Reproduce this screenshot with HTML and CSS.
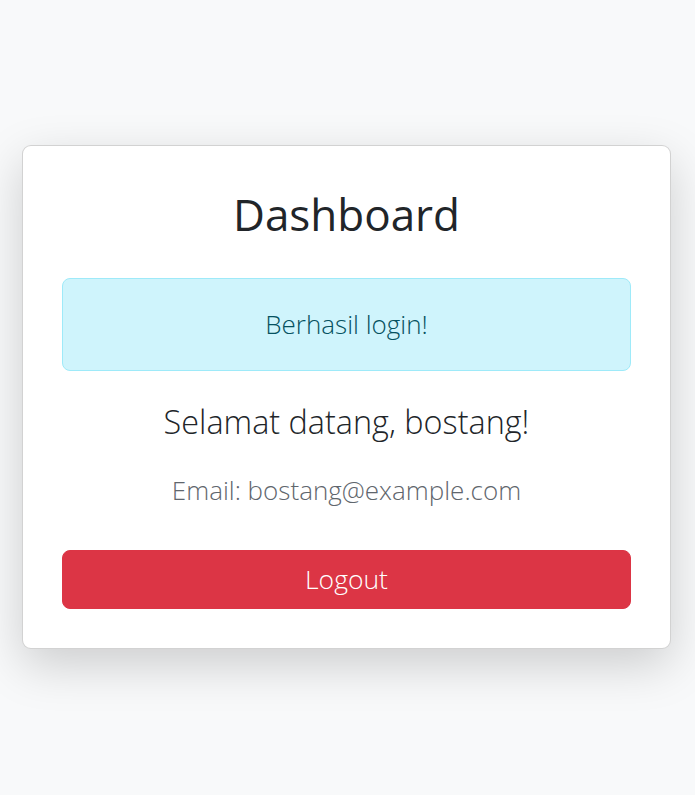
FILE: index.html
```html
<!DOCTYPE html>
<html lang="id">
<head>
<meta charset="utf-8">
<title>Dashboard</title>
<link rel="stylesheet" href="styles.css">
</head>
<body>
<main class="page">
  <section class="card">
    <h1 class="title">Dashboard</h1>
    <div class="alert">Berhasil login!</div>
    <p class="welcome">Selamat datang, bostang!</p>
    <p class="email">Email: bostang@example.com</p>
    <button class="logout" type="button">Logout</button>
  </section>
</main>
</body>
</html>
```
FILE: styles.css
```css
* { box-sizing: border-box; }
html, body { margin: 0; padding: 0; }
body {
  background: #f8f9fa;
  font-family: "Open Sans", "Noto Sans", sans-serif;
  font-weight: 300;
  color: #212529;
}
.page {
  min-height: 795px;
  display: flex;
  align-items: flex-start;
  padding: 145px 0 0 22px;
}
.card {
  width: 649px;
  background: #fff;
  border: 1px solid rgba(0,0,0,0.175);
  border-radius: 9px;
  box-shadow: 0 16px 48px rgba(0,0,0,0.175);
  padding: 42px 39px 39px;
  display: flex;
  flex-direction: column;
  text-align: center;
}
.title {
  margin: 0;
  font-size: 44px;
  font-weight: 400;
  line-height: 52px;
}
.alert {
  margin-top: 38px;
  background: #cff4fc;
  border: 1px solid #9eeaf9;
  color: #055160;
  border-radius: 8px;
  font-size: 26px;
  line-height: 39px;
  padding: 26px 16px;
}
.welcome {
  margin: 30px 0 0;
  font-size: 32.4px;
  line-height: 40px;
}
.email {
  margin: 30px 0 0;
  font-size: 26px;
  line-height: 39px;
  color: #5f666d;
}
.logout {
  margin-top: 40px;
  width: 100%;
  background: #dc3545;
  color: #fff;
  border: 1px solid #dc3545;
  border-radius: 8px;
  font-family: inherit;
  font-weight: 300;
  font-size: 26.5px;
  line-height: 39px;
  padding: 9px 16px;
}
```
